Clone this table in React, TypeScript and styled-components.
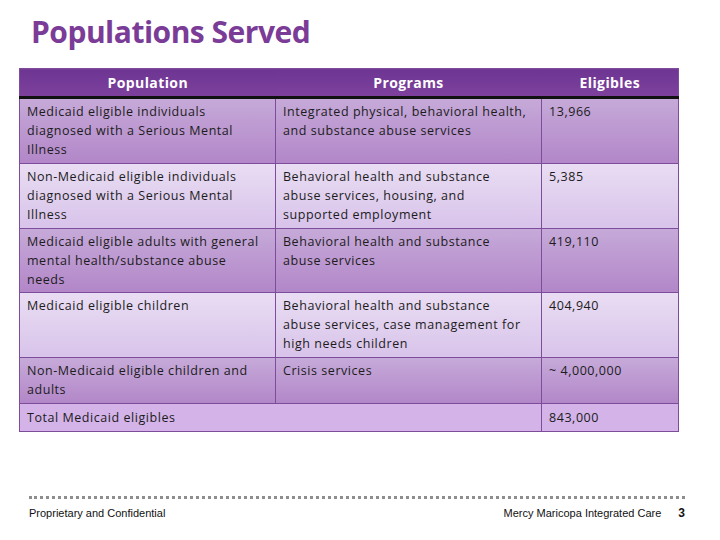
import React from 'react';
import styled, { createGlobalStyle } from 'styled-components';

interface RowData {
  population: string[];
  programs: string[];
  eligibles: string;
}

const rows: RowData[] = [
  {
    population: ['Medicaid eligible individuals', 'diagnosed with a Serious Mental', 'Illness'],
    programs: ['Integrated physical, behavioral health,', 'and substance abuse services'],
    eligibles: '13,966',
  },
  {
    population: ['Non-Medicaid eligible individuals', 'diagnosed with a Serious Mental', 'Illness'],
    programs: ['Behavioral health and substance', 'abuse services, housing, and', 'supported employment'],
    eligibles: '5,385',
  },
  {
    population: ['Medicaid eligible adults with general', 'mental health/substance abuse', 'needs'],
    programs: ['Behavioral health and substance', 'abuse services'],
    eligibles: '419,110',
  },
  {
    population: ['Medicaid eligible children'],
    programs: ['Behavioral health and substance', 'abuse services, case management for', 'high needs children'],
    eligibles: '404,940',
  },
  {
    population: ['Non-Medicaid eligible children and', 'adults'],
    programs: ['Crisis services'],
    eligibles: '~ 4,000,000',
  },
];

const Lines: React.FC<{ lines: string[] }> = ({ lines }) => (
  <>
    {lines.map((line, i) => (
      <Line key={i}>{line}</Line>
    ))}
  </>
);

const App: React.FC = () => {
  return (
    <>
      <GlobalStyle />
      <Slide>
        <Title>Populations Served</Title>
        <Table>
          <colgroup>
            <col style={{ width: 256 }} />
            <col style={{ width: 266 }} />
            <col style={{ width: 137 }} />
          </colgroup>
          <thead>
            <tr>
              <HeadCell>Population</HeadCell>
              <HeadCell>Programs</HeadCell>
              <HeadCell>Eligibles</HeadCell>
            </tr>
          </thead>
          <tbody>
            {rows.map((row, i) => (
              <Row key={i} shade={i % 2 === 0 ? 'dark' : 'light'}>
                <Cell><Lines lines={row.population} /></Cell>
                <Cell><Lines lines={row.programs} /></Cell>
                <Cell>{row.eligibles}</Cell>
              </Row>
            ))}
            <Row shade="total">
              <TotalCell colSpan={2}>Total Medicaid eligibles</TotalCell>
              <TotalCell>843,000</TotalCell>
            </Row>
          </tbody>
        </Table>
        <Footer>
          <FooterText>Proprietary and Confidential</FooterText>
          <FooterRight>
            <FooterText>Mercy Maricopa Integrated Care</FooterText>
            <PageNum>3</PageNum>
          </FooterRight>
        </Footer>
      </Slide>
    </>
  );
};

export default App;

const GlobalStyle = createGlobalStyle`
  html, body {
    margin: 0;
    padding: 0;
    background: #fff;
  }
`;

const Slide = styled.div`
  width: 720px;
  height: 540px;
  box-sizing: border-box;
  padding: 12px 0 0 19px;
  display: flex;
  flex-direction: column;
  font-family: "Open Sans", "Liberation Sans", sans-serif;
`;

const Title = styled.h1`
  margin: 0 0 16px 12px;
  font-size: 30px;
  line-height: 40px;
  font-weight: 700;
  color: #7a3c97;
  letter-spacing: -0.5px;
`;

const Table = styled.table`
  width: 659px;
  border-collapse: collapse;
  table-layout: fixed;
  border: 1px solid #7d4d9c;
`;

const HeadCell = styled.th`
  height: 27px;
  padding: 0 7px;
  background: linear-gradient(#6d3592, #7e409d);
  border-bottom: 3px solid #111;
  color: #fff;
  font-size: 14px;
  font-weight: 700;
  letter-spacing: 0.4px;
  text-align: center;
`;

const shades = {
  dark: 'linear-gradient(#c6aad9, #b286c8)',
  light: 'linear-gradient(#e9ddf3, #d8c3ea)',
  total: '#d3b3e8',
};

const Row = styled.tr<{ shade: keyof typeof shades }>`
  background: ${props => shades[props.shade]};
`;

const Cell = styled.td`
  padding: 3px 7px 3.8px;
  border: 1px solid #7d4d9c;
  vertical-align: top;
  font-size: 12.5px;
  line-height: 19px;
  color: #1c1c1c;
  letter-spacing: 0.55px;
  white-space: nowrap;
`;

const TotalCell = styled(Cell)`
  padding: 4px 7px 4px;
`;

const Line = styled.div`
  white-space: nowrap;
`;

const Footer = styled.div`
  margin: auto 35px 20px 10px;
  border-top: 3px dotted #8e8e8e;
  padding-top: 7px;
  display: flex;
  justify-content: space-between;
  align-items: baseline;
  font-family: "Liberation Sans", Arial, sans-serif;
`;

const FooterText = styled.span`
  font-size: 11px;
  color: #111;
`;

const FooterRight = styled.div`
  display: flex;
  gap: 17px;
  align-items: baseline;
`;

const PageNum = styled.span`
  font-size: 12px;
  font-weight: 700;
  color: #111;
`;
